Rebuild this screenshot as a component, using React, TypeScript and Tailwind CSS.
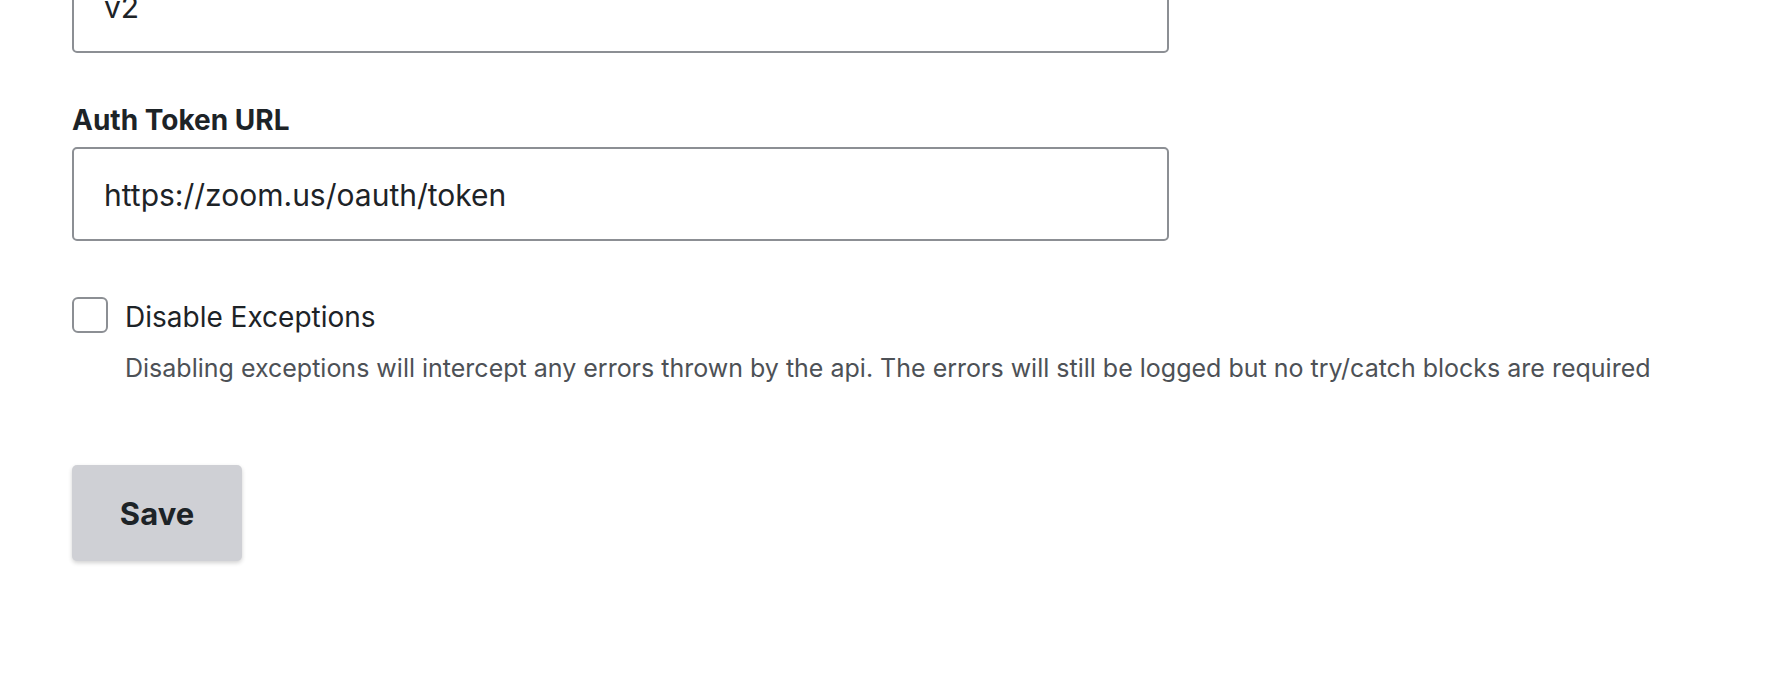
import React from 'react';

const font = { fontFamily: 'Inter, "Noto Sans", sans-serif' };

export default function App() {
  return (
    <div className="min-h-[700px] bg-white text-[#1d2327]" style={font}>
      {/* page is scrolled: the first field sits partly above the fold */}
      <div className="-mt-[41px] pl-[72px] flex flex-col">
        <input
          readOnly
          defaultValue="v2"
          className="w-[1097px] h-[94px] px-[30px] pt-[2px] text-[30px] text-[#1d2327] border-2 border-[#8c8f94] rounded-[5px] outline-none bg-white"
        />

        <label className="mt-[48px] text-[28px] leading-[38px] font-bold text-[#1d2327]">Auth Token URL</label>
        <input
          readOnly
          defaultValue="https://zoom.us/oauth/token"
          className="mt-[8px] w-[1097px] h-[94px] px-[30px] pt-[2px] text-[30px] text-[#1d2327] border-2 border-[#8c8f94] rounded-[5px] outline-none bg-white"
        />

        <div className="mt-[53px] flex items-center gap-[17px]">
          <span className="w-[36px] h-[36px] border-2 border-[#8c8f94] rounded-[6px] bg-white shrink-0" />
          <span className="pt-[5px] text-[28px] leading-[36px] text-[#1d2327]">Disable Exceptions</span>
        </div>
        <p className="mt-[16px] pl-[53px] text-[25px] leading-[34px] text-[#4d5156]">
          Disabling exceptions will intercept any errors thrown by the api. The errors will still be logged but no try/catch blocks are required
        </p>

        <div className="mt-[80px]">
          <button className="w-[170px] h-[96px] rounded-[5px] bg-[#cfd0d5] pt-[2px] text-[31px] font-bold text-[#1d2327] shadow-[0_2px_4px_rgba(0,0,0,0.18)]">
            Save
          </button>
        </div>
      </div>
    </div>
  );
}
